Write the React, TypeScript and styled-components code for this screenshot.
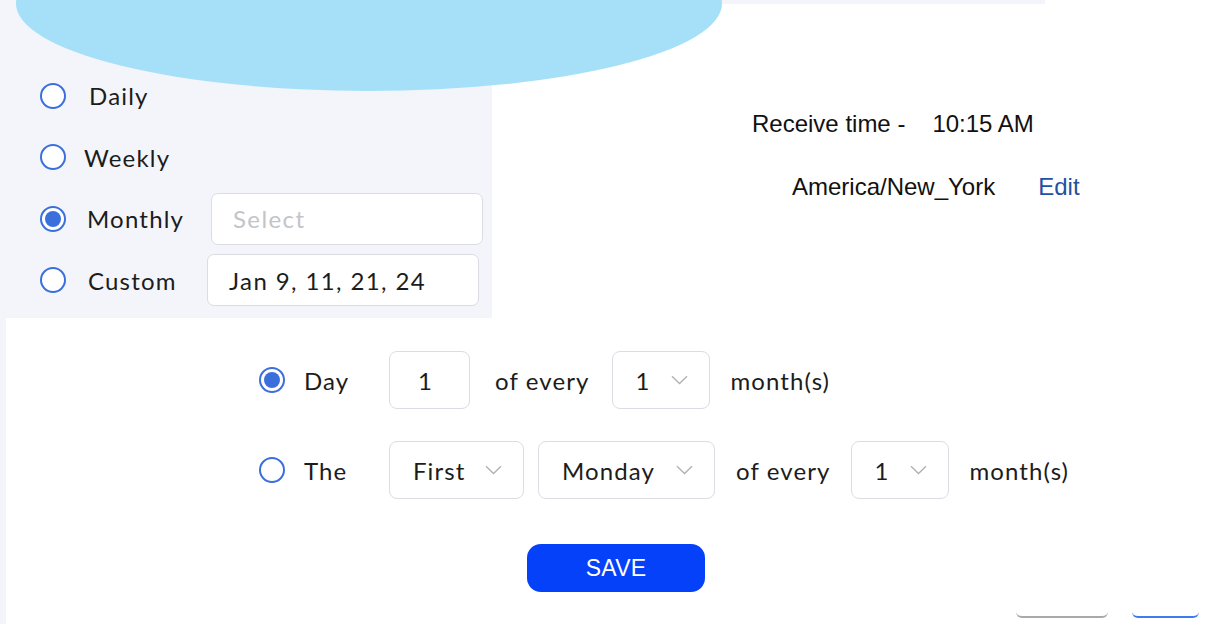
import React from 'react';
import styled, {createGlobalStyle} from 'styled-components';

const GlobalStyle = createGlobalStyle`
	html, body {
		margin: 0;
		padding: 0;
		background: #FFF;
	}
	body {
		font-family: Lato, "Open Sans", sans-serif;
		color: #1c1c1c;
	}
`;

const Page = styled.div`
	position: relative;
	width: 1231px;
	height: 624px;
	overflow: hidden;
	background: #FFF;
	display: flex;
	flex-direction: column;
`;

const Blob = styled.div`
	position: absolute;
	left: 16px;
	top: -84px;
	width: 706px;
	height: 175px;
	border-radius: 50%;
	background: #a6e0f8;
	z-index: 1;
`;

const Top = styled.section`
	display: flex;
	height: 318px;
`;

const FrequencyPanel = styled.div`
	width: 492px;
	background: #f4f5fa;
	padding-top: 65px;
	box-sizing: border-box;
	display: flex;
	flex-direction: column;
`;

const FrequencyRow = styled.div`
	height: 61.5px;
	display: flex;
	align-items: center;
	padding-left: 40px;
`;

const Radio = styled.span<{ checked?: boolean }>`
	width: 26px;
	height: 26px;
	box-sizing: border-box;
	border-radius: 50%;
	border: 2px solid #3a6fdc;
	flex-shrink: 0;
	display: flex;
	align-items: center;
	justify-content: center;
	background: #FFF;
	&::after {
		content: '';
		display: ${p => p.checked ? 'block' : 'none'};
		width: 16px;
		height: 16px;
		border-radius: 50%;
		background: #3a6fdc;
	}
`;

const FrequencyLabel = styled.span<{ shift: number }>`
	margin-left: ${p => p.shift}px;
	font-size: 24px;
	letter-spacing: 1.2px;
`;

const Field = styled.div<{ inset: number }>`
	margin-left: auto;
	margin-right: ${p => p.inset}px;
	width: 272px;
	height: 52px;
	box-sizing: border-box;
	border: 1px solid #dcdde2;
	border-radius: 7px;
	background: #FFF;
	display: flex;
	align-items: center;
	padding-left: 21px;
	font-size: 24px;
	letter-spacing: 1.4px;
	&.placeholder {
		color: #c3c4c8;
	}
`;

const SchedulePanel = styled.div`
	flex: 1;
	display: flex;
	flex-direction: column;
	font-family: "Liberation Sans", Arial, sans-serif;
	font-size: 24px;
	color: #111;
`;

const TopStrip = styled.div`
	margin-left: 228px;
	width: 325px;
	height: 4px;
	background: #f4f5fa;
`;

const InfoLine = styled.div<{ indent: number; top: number }>`
	display: flex;
	align-items: center;
	margin-left: ${p => p.indent}px;
	margin-top: ${p => p.top}px;
	line-height: 28px;
	gap: 27px;
`;

const EditLink = styled.span`
	color: #2450a2;
	margin-left: 16px;
`;

const Bottom = styled.section`
	flex: 1;
	border-left: 6px solid #f4f5fa;
	display: flex;
	flex-direction: column;
	padding-top: 33px;
`;

const OptionRow = styled.div<{ spacing: number }>`
	display: flex;
	align-items: center;
	height: 58px;
	padding-left: 253px;
	margin-bottom: ${p => p.spacing}px;
	font-size: 24px;
	letter-spacing: 1.1px;
`;

const OptionLabel = styled.span`
	width: 85px;
	margin-left: 19px;
	box-sizing: border-box;
`;

const Text = styled.span<{ before: number }>`
	margin-left: ${p => p.before}px;
`;

const Box = styled.div<{ width: number; before?: number }>`
	width: ${p => p.width}px;
	height: 58px;
	margin-left: ${p => p.before || 0}px;
	box-sizing: border-box;
	border: 1px solid #dcdde2;
	border-radius: 8px;
	background: #FFF;
	display: flex;
	align-items: center;
	font-size: 24px;
	color: #1c1c1c;
	&.number {
		justify-content: center;
		padding-right: 8px;
	}
	&.select {
		justify-content: space-between;
		padding: 0 21px 0 23px;
	}
`;

const Chevron = () =>
	<svg width="17" height="10" viewBox="0 0 17 10" fill="none">
		<path d="M1 1.2 L8.5 8.5 L16 1.2" stroke="#b0b0b4" strokeWidth="1.3"/>
	</svg>;

const SaveButton = styled.button`
	align-self: flex-start;
	margin-left: 521px;
	width: 178px;
	height: 48px;
	border: none;
	border-radius: 14px;
	background: #0541f8;
	color: #FFF;
	font-family: "Liberation Sans", Arial, sans-serif;
	font-size: 23px;
	letter-spacing: 0.2px;
`;

const Footer = styled.div`
	display: flex;
	margin-top: 20px;
	padding-left: 1010px;
	gap: 24px;
`;

const GhostEdge = styled.span<{ width: number; color: string }>`
	width: ${p => p.width}px;
	height: 6px;
	box-sizing: border-box;
	border-bottom: 2px solid ${p => p.color};
	border-radius: 0 0 6px 6px;
`;

const frequencies = [
	{label: 'Daily', shift: 23},
	{label: 'Weekly', shift: 18},
	{label: 'Monthly', shift: 21, checked: true, field: 'Select', placeholder: true, inset: 9},
	{label: 'Custom', shift: 22, field: 'Jan 9, 11, 21, 24', inset: 13},
];

export default function App() {
	return (
		<Page>
			<GlobalStyle/>
			<Blob/>
			<Top>
				<FrequencyPanel>
					{frequencies.map(f =>
						<FrequencyRow key={f.label}>
							<Radio checked={f.checked}/>
							<FrequencyLabel shift={f.shift}>{f.label}</FrequencyLabel>
							{f.field &&
								<Field inset={f.inset!} className={f.placeholder ? 'placeholder' : ''}>{f.field}</Field>}
						</FrequencyRow>)}
				</FrequencyPanel>
				<SchedulePanel>
					<TopStrip/>
					<InfoLine indent={260} top={106}>
						<span>Receive time -</span>
						<span>10:15 AM</span>
					</InfoLine>
					<InfoLine indent={300} top={35}>
						<span>America/New_York</span>
						<EditLink>Edit</EditLink>
					</InfoLine>
				</SchedulePanel>
			</Top>
			<Bottom>
				<OptionRow spacing={32}>
					<Radio checked/>
					<OptionLabel>Day</OptionLabel>
					<Box width={81} className="number">1</Box>
					<Text before={25}>of every</Text>
					<Box width={98} before={22} className="select">1<Chevron/></Box>
					<Text before={21}>month(s)</Text>
				</OptionRow>
				<OptionRow spacing={45}>
					<Radio/>
					<OptionLabel>The</OptionLabel>
					<Box width={135} className="select">First<Chevron/></Box>
					<Box width={177} before={14} className="select">Monday<Chevron/></Box>
					<Text before={21}>of every</Text>
					<Box width={98} before={20} className="select">1<Chevron/></Box>
					<Text before={21}>month(s)</Text>
				</OptionRow>
				<SaveButton>SAVE</SaveButton>
				<Footer>
					<GhostEdge width={92} color="#a9a9ad"/>
					<GhostEdge width={67} color="#3d7bf0"/>
				</Footer>
			</Bottom>
		</Page>
	);
}
